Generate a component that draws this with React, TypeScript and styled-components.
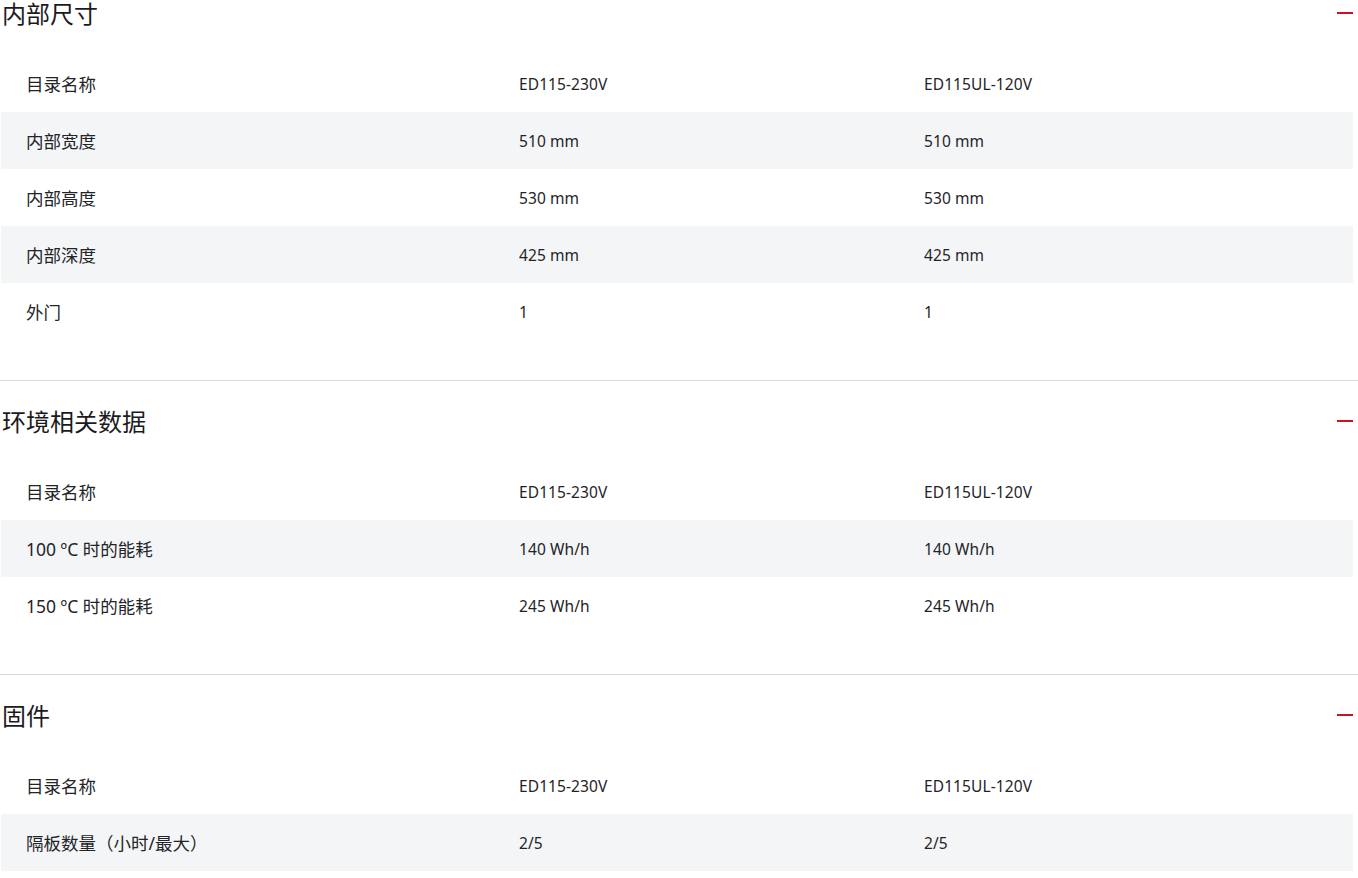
import React from "react";
import styled, { createGlobalStyle } from "styled-components";

const GlobalStyle = createGlobalStyle`
  html, body {
    margin: 0;
    padding: 0;
    background: #ffffff;
  }
  body {
    font-family: "Noto Sans", "Noto Sans CJK SC", sans-serif;
    color: #222326;
    overflow: hidden;
  }
`;

const Page = styled.div`
  margin-top: -28px;
  width: 1358px;
`;

const Section = styled.section`
  border-top: 1px solid #d9d9d9;
  padding: 24px 5px 40px 1px;
`;

const Header = styled.div`
  display: flex;
  align-items: center;
  justify-content: space-between;
  height: 32px;
`;

const Title = styled.h2`
  margin: 0 0 0 1px;
  font-family: "Noto Sans CJK SC", "Noto Sans", sans-serif;
  font-size: 24px;
  font-weight: 400;
  line-height: 32px;
  color: #1b1b1d;
`;

const Minus = styled.span`
  display: block;
  width: 16px;
  height: 2px;
  background: #c4161c;
`;

const Table = styled.div`
  margin-top: 26px;
`;

const Row = styled.div<{ $shade: boolean }>`
  display: grid;
  grid-template-columns: 493px 405px 1fr;
  align-items: center;
  height: 57px;
  background: ${(p) => (p.$shade ? "#f4f5f7" : "transparent")};
`;

const Cell = styled.div<{ $label?: boolean }>`
  padding-left: 25px;
  font-size: ${(p) => (p.$label ? "17.5px" : "15.5px")};
  letter-spacing: ${(p) => (p.$label ? "0" : "0.1px")};
  line-height: 24px;
  color: #232428;
`;

type Data = { title: string; rows: string[][] };

const sections: Data[] = [
  {
    title: "内部尺寸",
    rows: [
      ["目录名称", "ED115-230V", "ED115UL-120V"],
      ["内部宽度", "510 mm", "510 mm"],
      ["内部高度", "530 mm", "530 mm"],
      ["内部深度", "425 mm", "425 mm"],
      ["外门", "1", "1"],
    ],
  },
  {
    title: "环境相关数据",
    rows: [
      ["目录名称", "ED115-230V", "ED115UL-120V"],
      ["100 ºC 时的能耗", "140 Wh/h", "140 Wh/h"],
      ["150 ºC 时的能耗", "245 Wh/h", "245 Wh/h"],
    ],
  },
  {
    title: "固件",
    rows: [
      ["目录名称", "ED115-230V", "ED115UL-120V"],
      ["隔板数量（小时/最大）", "2/5", "2/5"],
      ["", "", ""],
    ],
  },
];

export default function App() {
  return (
    <>
      <GlobalStyle />
      <Page>
        {sections.map((s) => (
          <Section key={s.title}>
            <Header>
              <Title>{s.title}</Title>
              <Minus />
            </Header>
            <Table>
              {s.rows.map((r, i) => (
                <Row key={i} $shade={i % 2 === 1}>
                  {r.map((c, j) => (
                    <Cell key={j} $label={j === 0}>
                      {c}
                    </Cell>
                  ))}
                </Row>
              ))}
            </Table>
          </Section>
        ))}
      </Page>
    </>
  );
}
